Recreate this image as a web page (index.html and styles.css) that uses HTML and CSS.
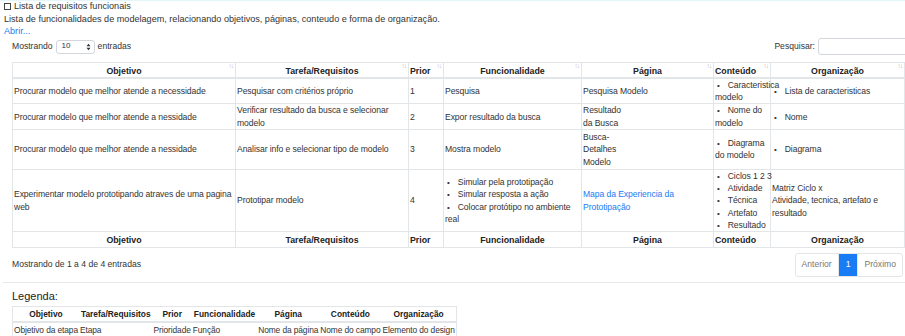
FILE: index.html
```html
<!DOCTYPE html>
<html lang="pt">
<head>
<meta charset="utf-8">
<link rel="stylesheet" href="styles.css">
</head>
<body>
<div class="page">
  <div class="intro">
    <div class="title"><span class="box"></span>Lista de requisitos funcionais</div>
    <div>Lista de funcionalidades de modelagem, relacionando objetivos, páginas, conteudo e forma de organização.</div>
    <a class="link" href="#">Abrir...</a>
  </div>
  <div class="dt">
    <div class="controls">
      <label class="length">Mostrando <span class="select">10<svg class="arrows" width="5" height="8" viewBox="0 0 5 8"><path d="M0.5 3.2 L2.5 0.8 L4.5 3.2 Z M0.5 4.8 L2.5 7.2 L4.5 4.8 Z" fill="#333"/></svg></span> entradas</label>
      <label class="search">Pesquisar: <span class="input"></span></label>
    </div>
    <table class="grid">
      <colgroup>
        <col style="width:223px"><col style="width:173px"><col style="width:35px"><col style="width:138px"><col style="width:132px"><col style="width:57px"><col style="width:134px">
      </colgroup>
      <thead>
        <tr>
          <th class="c">Objetivo<span class="sort">↑↓</span></th>
          <th class="c">Tarefa/Requisitos<span class="sort">↑↓</span></th>
          <th>Prior<span class="sort">↑↓</span></th>
          <th class="c">Funcionalidade<span class="sort">↑↓</span></th>
          <th class="c">Página<span class="sort">↑↓</span></th>
          <th>Conteúdo<span class="sort">↑↓</span></th>
          <th class="c">Organização<span class="sort">↑↓</span></th>
        </tr>
      </thead>
      <tbody>
        <tr>
          <td>Procurar modelo que melhor atende a necessidade</td>
          <td>Pesquisar com critérios próprio</td>
          <td>1</td>
          <td>Pesquisa</td>
          <td>Pesquisa Modelo</td>
          <td><ul><li>Caracteristica modelo</li></ul></td>
          <td><ul><li>Lista de caracteristicas</li></ul></td>
        </tr>
        <tr>
          <td>Procurar modelo que melhor atende a nessidade</td>
          <td>Verificar resultado da busca e selecionar modelo</td>
          <td>2</td>
          <td>Expor resultado da busca</td>
          <td>Resultado<br>da Busca</td>
          <td><ul><li>Nome do modelo</li></ul></td>
          <td><ul><li>Nome</li></ul></td>
        </tr>
        <tr>
          <td>Procurar modelo que melhor atende a nessidade</td>
          <td>Analisar info e selecionar tipo de modelo</td>
          <td>3</td>
          <td>Mostra modelo</td>
          <td class="pad3">Busca-<br>Detalhes<br>Modelo</td>
          <td><ul><li>Diagrama do modelo</li></ul></td>
          <td><ul><li>Diagrama</li></ul></td>
        </tr>
        <tr>
          <td>Experimentar modelo prototipando atraves de uma pagina web</td>
          <td>Prototipar modelo</td>
          <td>4</td>
          <td><ul><li>Simular pela prototipação</li><li>Simular resposta a ação</li><li>Colocar protótipo no ambiente real</li></ul></td>
          <td><a class="link" href="#">Mapa da Experiencia da Prototipação</a></td>
          <td><ul class="nowrap"><li>Ciclos 1 2 3</li><li>Atividade</li><li>Técnica</li><li>Artefato</li><li>Resultado</li></ul></td>
          <td>Matriz Ciclo x<br>Atividade, tecnica, artefato e resultado</td>
        </tr>
      </tbody>
      <tfoot>
        <tr>
          <th class="c">Objetivo</th>
          <th class="c">Tarefa/Requisitos</th>
          <th>Prior</th>
          <th class="c">Funcionalidade</th>
          <th class="c">Página</th>
          <th>Conteúdo</th>
          <th class="c">Organização</th>
        </tr>
      </tfoot>
    </table>
    <div class="bottom">
      <div class="info">Mostrando de 1 a 4 de 4 entradas</div>
      <ul class="pager">
        <li class="off">Anterior</li>
        <li class="active">1</li>
        <li class="off">Próximo</li>
      </ul>
    </div>
  </div>
  <div class="legend">
    <div class="legend-title">Legenda:</div>
    <table class="leg">
      <thead>
        <tr><th>Objetivo</th><th>Tarefa/Requisitos</th><th>Prior</th><th>Funcionalidade</th><th>Página</th><th>Conteúdo</th><th>Organização</th></tr>
      </thead>
      <tbody>
        <tr><td>Objetivo da etapa</td><td>Etapa</td><td>Prioridade</td><td>Função</td><td>Nome da página</td><td>Nome do campo</td><td>Elemento do design</td></tr>
      </tbody>
    </table>
  </div>
</div>
</body>
</html>
```

FILE: styles.css
```css
* { box-sizing: border-box; }
html, body { margin: 0; padding: 0; }
body {
  font-family: "Liberation Sans", Arial, sans-serif;
  font-size: 9.1px;
  line-height: 12.5px;
  color: #333;
  background: #fff;
  border-top: 1px solid #e3f6fb;
  overflow: hidden;
}
.page { width: 905px; }
.intro { padding-left: 4px; margin-top: -1px; }
.title { display: flex; align-items: center; }
.box {
  display: inline-block;
  width: 7px; height: 7px;
  border: 1px solid #444;
  margin-right: 3px;
}
.link { color: #1a7cf5; text-decoration: none; }

.dt {
  margin-left: 3px;
  padding-left: 9px;
  padding-right: 2px;
  border-bottom: 1px solid #e6e9ec;
  font-size: 8.6px;
}
.controls {
  display: flex;
  justify-content: space-between;
  align-items: center;
  height: 16px;
  margin-top: 1px;
  margin-right: -10px;
}
.length { display: flex; align-items: center; gap: 3px; }
.select {
  display: inline-flex;
  align-items: center;
  justify-content: space-between;
  width: 39px; height: 14px;
  border: 1px solid #d3d7db;
  border-radius: 3px;
  padding: 0 3px 0 5px;
  font-size: 8px;
  color: #333;
}
.search { display: flex; align-items: center; gap: 3px; }
.input {
  display: inline-block;
  width: 95px; height: 17px;
  border: 1px solid #d3d7db;
  border-radius: 3px;
}

.grid {
  width: 891px;
  table-layout: fixed;
  border-collapse: collapse;
  margin-top: 7px;
  border: 1px solid #e3e6e9;
  line-height: 12.3px;
}
.grid th, .grid td {
  border: 1px solid #e3e6e9;
  vertical-align: middle;
  text-align: left;
}
.grid th {
  position: relative;
  font-weight: bold;
  color: #222;
  padding: 2px 1px 0;
  font-size: 8.8px;
}
.grid thead th { border-bottom: 2px solid #e3e6e9; }
.grid th.c { text-align: center; }
.grid td { padding: 0 1px; letter-spacing: -0.08px; }
.grid td.pad3 { padding: 1px 1px; }
.sort {
  position: absolute;
  top: -1px;
  right: 2px;
  font-size: 6.5px;
  font-weight: normal;
  letter-spacing: -1px;
  color: #bdbdbd;
  line-height: 8px;
}
.grid ul { margin: 0; padding: 0; list-style: none; }
.grid li::before {
  content: "\2022";
  padding-left: 2px;
  padding-right: 8px;
  font-size: 8px;
  line-height: 0;
}
.grid ul.nowrap li { white-space: nowrap; }

.bottom {
  display: flex;
  justify-content: space-between;
  align-items: center;
  padding: 5px 0 5px;
}
.pager {
  display: flex;
  margin: 0;
  padding: 0;
  list-style: none;
  border: 1px solid #e3e6e9;
  border-radius: 3px;
  height: 24px;
  align-items: stretch;
}
.pager li {
  display: flex;
  align-items: center;
  padding: 0 6px;
  color: #777;
}
.pager li + li { border-left: 1px solid #e3e6e9; }
.pager li.active {
  background: #1a7cf5;
  color: #fff;
  padding: 0 7px;
}

.legend { padding-left: 12px; }
.legend-title { font-size: 11px; line-height: 14px; margin-top: 6px; color: #222; }
.leg {
  border-collapse: collapse;
  margin-top: 3px;
  border: 1px solid #e3e6e9;
  font-size: 8.4px;
  line-height: 12px;
}
.leg th {
  font-weight: bold;
  text-align: center;
  padding: 1px 2px;
  border-bottom: 2px solid #e3e6e9;
  color: #222;
  white-space: nowrap;
}
.leg td { padding: 1px 1px; white-space: nowrap; letter-spacing: -0.1px; }
```
